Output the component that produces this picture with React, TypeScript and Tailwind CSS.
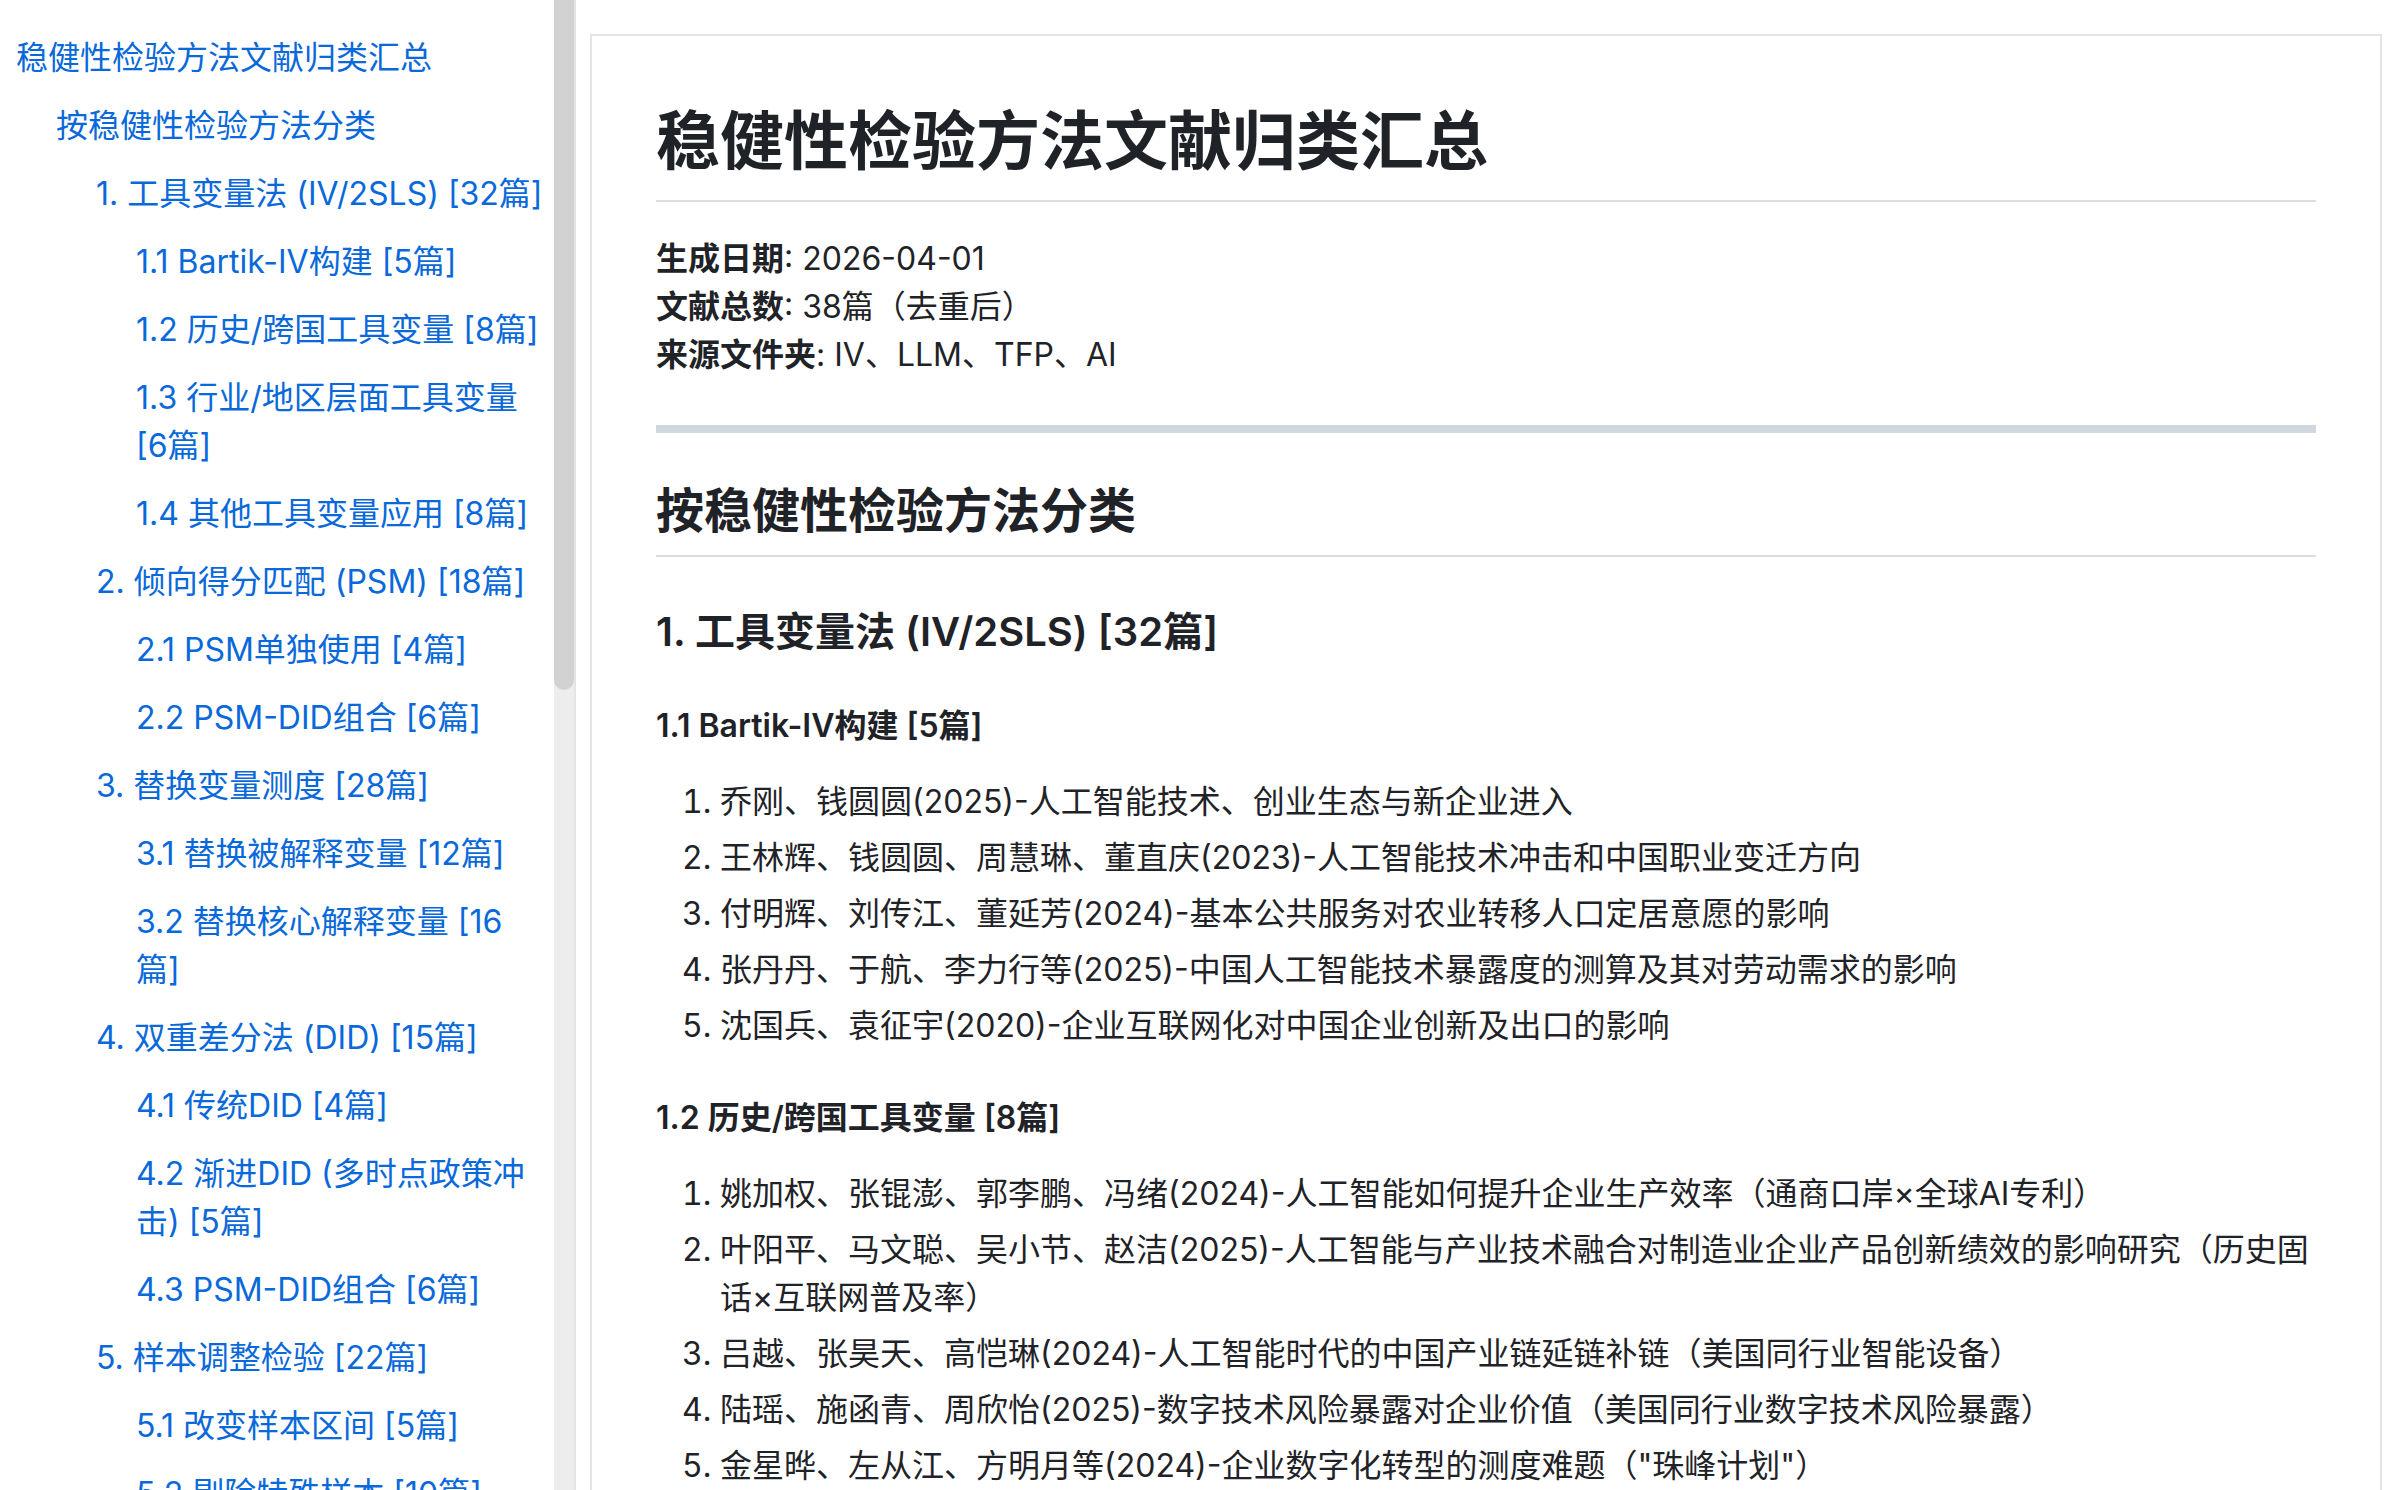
const FONT = 'font-[Inter,"Noto_Sans_CJK_SC",sans-serif]'

type TocItem = { level: number; text: string }

// line breaks follow the reference TOC panel
const toc: TocItem[] = [
  { level: 0, text: '稳健性检验方法文献归类汇总' },
  { level: 1, text: '按稳健性检验方法分类' },
  { level: 2, text: '1. 工具变量法 (IV/2SLS) [32篇]' },
  { level: 3, text: '1.1 Bartik-IV构建 [5篇]' },
  { level: 3, text: '1.2 历史/跨国工具变量 [8篇]' },
  { level: 3, text: '1.3 行业/地区层面工具变量\n[6篇]' },
  { level: 3, text: '1.4 其他工具变量应用 [8篇]' },
  { level: 2, text: '2. 倾向得分匹配 (PSM) [18篇]' },
  { level: 3, text: '2.1 PSM单独使用 [4篇]' },
  { level: 3, text: '2.2 PSM-DID组合 [6篇]' },
  { level: 2, text: '3. 替换变量测度 [28篇]' },
  { level: 3, text: '3.1 替换被解释变量 [12篇]' },
  { level: 3, text: '3.2 替换核心解释变量 [16\n篇]' },
  { level: 2, text: '4. 双重差分法 (DID) [15篇]' },
  { level: 3, text: '4.1 传统DID [4篇]' },
  { level: 3, text: '4.2 渐进DID (多时点政策冲\n击) [5篇]' },
  { level: 3, text: '4.3 PSM-DID组合 [6篇]' },
  { level: 2, text: '5. 样本调整检验 [22篇]' },
  { level: 3, text: '5.1 改变样本区间 [5篇]' },
  { level: 3, text: '5.2 剔除特殊样本 [10篇]' },
  { level: 3, text: '5.3 缩尾与截尾处理 [7篇]' },
]

const indent = ['pl-0', 'pl-[40px]', 'pl-[80px]', 'pl-[120px]']

const bartik = [
  '乔刚、钱圆圆(2025)-人工智能技术、创业生态与新企业进入',
  '王林辉、钱圆圆、周慧琳、董直庆(2023)-人工智能技术冲击和中国职业变迁方向',
  '付明辉、刘传江、董延芳(2024)-基本公共服务对农业转移人口定居意愿的影响',
  '张丹丹、于航、李力行等(2025)-中国人工智能技术暴露度的测算及其对劳动需求的影响',
  '沈国兵、袁征宇(2020)-企业互联网化对中国企业创新及出口的影响',
]

const history = [
  '姚加权、张锟澎、郭李鹏、冯绪(2024)-人工智能如何提升企业生产效率（通商口岸×全球AI专利）',
  '叶阳平、马文聪、吴小节、赵洁(2025)-人工智能与产业技术融合对制造业企业产品创新绩效的影响研究（历史固话×互联网普及率）',
  '吕越、张昊天、高恺琳(2024)-人工智能时代的中国产业链延链补链（美国同行业智能设备）',
  '陆瑶、施函青、周欣怡(2025)-数字技术风险暴露对企业价值（美国同行业数字技术风险暴露）',
  '金星晔、左从江、方明月等(2024)-企业数字化转型的测度难题（"珠峰计划"）',
  '黄群慧、余泳泽、张松林(2019)-互联网发展与制造业生产率提升（1984年邮电历史数据）',
]

function Sidebar() {
  return (
    <div className="w-[554px] shrink-0 overflow-hidden pt-[24px] pl-[16px] pr-[8px]">
      <ul>
        {toc.map((item) => (
          <li
            key={item.text}
            className={`${indent[item.level]} whitespace-pre-line py-[10px] text-[32px] leading-[48px] text-[#0969da]`}
          >
            {item.text}
          </li>
        ))}
      </ul>
    </div>
  )
}

function RefList({ items, className }: { items: string[]; className: string }) {
  return (
    <ol className={`list-decimal pl-[64px] ${className}`}>
      {items.map((t, i) => (
        <li key={t} className={`text-[32px] leading-[48px] ${i > 0 ? 'mt-[8px]' : ''}`}>
          {t}
        </li>
      ))}
    </ol>
  )
}

export default function App() {
  return (
    <div className={`flex h-[1490px] w-[2388px] overflow-hidden bg-white ${FONT}`}>
      <Sidebar />

      {/* fake scrollbar */}
      <div className="relative w-[20px] shrink-0 bg-[#ededed]">
        <div className="absolute inset-x-0 top-0 h-[690px] rounded-b-[10px] bg-[#d2d2d2]" />
      </div>
      <div className="w-[2px] shrink-0 bg-[#e4e4e4]" />

      <main className="ml-[14px] mr-[6px] flex-1 pt-[34px]">
        <article className="h-full border-x-2 border-t-2 border-[#e3e3ea] px-[64px] pt-[65px] text-[#1f2328]">
          <h1 className="border-b-2 border-[#d8dee4] pb-[19px] text-[64px] font-semibold leading-[80px]">
            稳健性检验方法文献归类汇总
          </h1>

          <p className="mt-[33px] text-[32px] leading-[48px]">
            <strong className="font-semibold">生成日期</strong>: 2026-04-01
            <br />
            <strong className="font-semibold">文献总数</strong>: 38篇（去重后）
            <br />
            <strong className="font-semibold">来源文件夹</strong>: IV、LLM、TFP、AI
          </p>

          <hr className="mt-[46px] h-[8px] border-0 bg-[#d0d7de]" />

          <h2 className="mt-[48px] border-b-2 border-[#d8dee4] pb-[14px] text-[48px] font-semibold leading-[60px]">
            按稳健性检验方法分类
          </h2>

          <h3 className="mt-[50px] text-[40px] font-semibold leading-[50px]">
            1. 工具变量法 (IV/2SLS) [32篇]
          </h3>

          <h4 className="mt-[49px] text-[32px] font-semibold leading-[40px]">
            1.1 Bartik-IV构建 [5篇]
          </h4>
          <RefList items={bartik} className="mt-[32px]" />

          <h4 className="mt-[48px] text-[32px] font-semibold leading-[40px]">
            1.2 历史/跨国工具变量 [8篇]
          </h4>
          <RefList items={history} className="mt-[32px]" />
        </article>
      </main>
    </div>
  )
}
